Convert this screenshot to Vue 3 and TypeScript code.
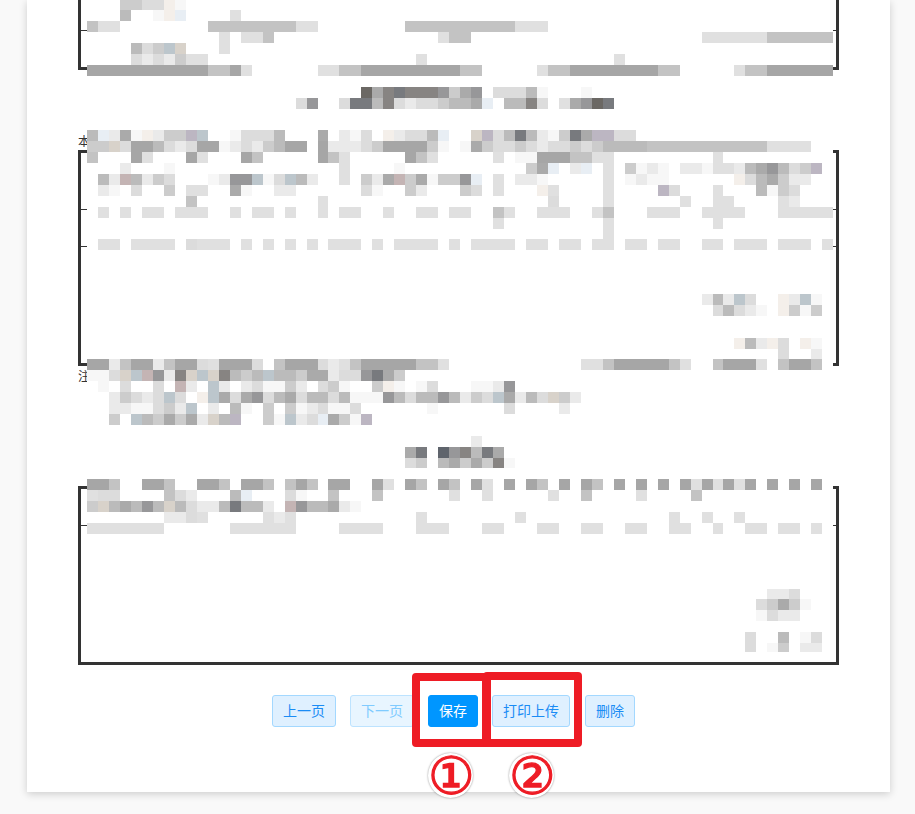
<script setup lang="ts">
interface Cell { key: string; x: number; y: number; w: number; h: number; fill: string }

const palette: Record<string, string> = {
  A: '#a6a6a6', B: '#c3c3c3', C: '#e0e0e0',
  '5': '#5f646c', '6': '#6b6864', '7': '#787a7e', '8': '#878482', '9': '#979799',
  a: '#aaaaaa', b: '#bbbbbb', c: '#cccccc', d: '#dcdcdc', e: '#eaeaea', f: '#f7f7f7',
  p: '#c4b4b4', u: '#bcc6cc', v: '#bcb6c2', w: '#d8d2ca', q: '#f4efea', r: '#e8eef4',
}

// Each row: top, height, then "firstColumn:tones" runs of 11px mosaic blocks.
const rows: [number, number, string][] = [
  [-1, 11, '3:ccddqf'],
  [10, 11, '3:b 6:fqr 13:C'],
  [21, 11, '0:BCC 11:BBBBBBBBCC 29:BBBBBBBBBBCCC'],
  [32, 11, '12:C 14:CCB 32:CBB 56:CCCCCC 62:BBBBBB'],
  [43, 11, '4:bdcuw 12:C'],
  [54, 11, '4:dedecCC 30:C 48:C'],
  [65, 11, '0:AAAAAAAAAAABBAC 21:CCBBAAAAAAAAABB 41:CBBAAAAAAAABB 59:CBBAAAAAA'],
  [87, 11, '25:6a878889ca9.dddbf 45:f'],
  [98, 11, '19:d9 23:d77b8deddcbbar.bb8d.Ca967'],
  [130, 11, '0:breafqeccvu 13:fdddb 21:a.efd.qeddbr 35:wvdb7befc7avvdd'],
  [141, 11, '0:ccwdAAbdedAAfedecbAA.Aeeedc 27:AAAAcf.facddcdeddcdcbbbbBBBBBBBBBBBCCCC'],
  [152, 11, '0:B 4:AC 9:AC 14:AB 21:ABC 29:ABC 37:C 39:ffAAABBCC 57:C'],
  [163, 11, '3:e 7:f 23:C 28:f 40:car.er.C.cfef.eefCCeba9bdcv'],
  [174, 11, '1:bepbecd 11:fe99ufdube 23:C 25:ceapcafcc9r 37:C 39:eef 47:C 49:feff 59:qdbacee'],
  [185, 11, '1:ef 4:d 7:c 9:CC 13:af 17:ee 25:df 29:ce 34:cd 37:C 41:qC 47:C 52:vd 57:C 61:bfcd'],
  [196, 11, '9:B 21:C 42:d 47:C 54:C 57:CC 63:Ce'],
  [207, 11, '1:C 3:C 5:CC 8:CCC 13:C 15:CC 18:C 21:C 23:CC 27:C 30:CC 33:CC 37:BC 41:CCC 46:CB 51:CCC 56:CCCC 63:CCCCC'],
  [218, 11, '37:C 47:C 57:C'],
  [229, 10, '47:C'],
  [239, 11, '1:CC 4:CCCC 9:dCCC 14:C 16:C 18:C 20:C 22:CCC 26:C 28:CCCC 33:C 35:CCCC 40:CC 43:CC 46:CC 49:CC 52:CC 56:CC 59:CCC 63:CCC 67:C'],
  [294, 11, '56:ebeud 63:qeuf'],
  [305, 11, '57:dbde 61:f 63:qcfc'],
  [338, 11, '59:qbeqd 65:qf'],
  [349, 10, '63:d 66:e'],
  [359, 11, '0:AAeBAAeBAAdCAAAd.BAAAdeCBAAAAABBC 45:CCBAAAAABC 57:BAAAC 63:BAAB'],
  [370, 11, '0:ffdwup9e8wuw8bcbubbcaaedd97ac'],
  [381, 11, '1:f 3:d 6:d 8:pe 11:ue 14:ed 16:ff 18:ce 21:dc 23:f 26:cqf 30:fd 35:ffe9'],
  [392, 11, '2:ecdedud.quada9dbadbbdbfff9bdbb9becduaebdwce'],
  [403, 11, '2:eeffdceu 11:e 13:bf 16:c 18:cfedffd 31:f 38:d 43:e'],
  [414, 11, '2:c 4:ubcacaewbv 16:cfuedracfv'],
  [436, 11, '35:e'],
  [447, 11, '29:a7 32:598b7a'],
  [458, 10, '29:dc 32:bacac8f'],
  [479, 11, '0:AAB 5:AAB 10:AAB 14:AAB 18:BAB 22:AA 26:AC 29:AB 32:AB 35:AC 38:A 40:AB 43:A 45:AB 48:A 50:A 52:A 54:ACACACA 62:A 64:A 66:A'],
  [490, 11, '0:Cdd 7:Bde 13:br 18:df 22:B 26:B 33:C 36:C 42:C 45:B 50:C 55:B'],
  [501, 11, '0:cwbab9bwbdeeb7bbe.p9bbaef'],
  [512, 11, '7:eedC 16:CeC 30:C 39:C 53:C 56:C 59:C'],
  [523, 11, '0:CCCCCCC 13:CCCCCC 23:CCCC 30:CCC 36:CC 41:CC 45:CC 49:CC 53:CC 57:C 60:CC 63:CC 66:C'],
  [589, 10, '62:eed'],
  [599, 11, '61:dcacf'],
  [610, 11, '61:fdee'],
  [632, 11, '60:d 63:b 65:fd'],
  [643, 9, '60:d 62:fc 65:ee'],
]

// The mosaic grid loses one pixel at two column boundaries.
function colX(i: number): number {
  return 87 + 11 * i - (i >= 58 ? 2 : i >= 22 ? 1 : 0)
}

const cells: Cell[] = rows.flatMap(([y, h, spec]) =>
  spec.split(' ').flatMap((run) => {
    const [start, tones] = run.split(':')
    return Array.from(tones).flatMap((tone, n) => {
      const i = Number(start) + n
      const fill = palette[tone]
      if (!fill) return []
      return [{ key: `${y}-${i}`, x: colX(i), y, w: colX(i + 1) - colX(i), h, fill }]
    })
  }),
)

const buttons = [
  { label: '上一页', kind: 'plain' },
  { label: '下一页', kind: 'disabled' },
  { label: '保存', kind: 'primary' },
  { label: '打印上传', kind: 'plain' },
  { label: '删除', kind: 'plain' },
]
</script>

<template>
  <div class="page">
    <main class="card">
      <section class="table table-open">
        <div class="row row-first"></div>
      </section>
      <p class="note note-top">本</p>
      <section class="table table-middle">
        <div class="row row-tall"></div>
        <div class="row row-short"></div>
      </section>
      <p class="note note-bottom">注</p>
      <section class="table table-last">
        <div class="row row-short"></div>
      </section>
      <div class="actions">
        <button v-for="b in buttons" :key="b.label" type="button" class="btn" :class="b.kind">{{ b.label }}</button>
      </div>
    </main>

    <svg class="mosaic" viewBox="0 0 915 814" width="915" height="814" shape-rendering="crispEdges" aria-hidden="true">
      <rect x="87" y="0" width="746" height="653" fill="#ffffff" />
      <rect v-for="c in cells" :key="c.key" :x="c.x" :y="c.y" :width="c.w" :height="c.h" :fill="c.fill" />
    </svg>

    <div class="mark mark-one"></div>
    <div class="mark mark-two"></div>
    <div class="num num-one">①</div>
    <div class="num num-two">②</div>
  </div>
</template>

<style scoped>
.page {
  position: relative;
  width: 915px;
  height: 814px;
  overflow: hidden;
  background: #f9f9f9;
  font-family: "Noto Sans CJK SC", "Noto Sans", sans-serif;
}
.card {
  box-sizing: border-box;
  width: 863px;
  height: 792px;
  margin-left: 27px;
  padding: 0 51px;
  background: #ffffff;
  box-shadow: 0 2px 8px rgba(0, 0, 0, 0.18);
  display: flex;
  flex-direction: column;
}
.table {
  box-sizing: border-box;
  flex: none;
  border: 3px solid #333333;
}
.table-open {
  height: 70px;
  border-top: 0;
}
.table-middle {
  height: 216px;
}
.table-last {
  height: 179px;
}
.row {
  box-sizing: border-box;
  border-bottom: 1px solid #333333;
}
.row-first {
  height: 31px;
}
.row-tall {
  height: 57px;
}
.row-short {
  height: 37px;
}
.note {
  flex: none;
  margin: 0;
  font-size: 12px;
  line-height: 19px;
  height: 19px;
  color: #333333;
}
.note-top {
  margin-top: 61px;
}
.note-bottom {
  height: 20px;
  line-height: 20px;
  margin-bottom: 100px;
}
.actions {
  display: flex;
  justify-content: center;
  gap: 14px;
  margin-top: 30px;
  padding-right: 10px;
}
.btn {
  box-sizing: border-box;
  height: 32px;
  padding: 0 10px 2px;
  border: 1px solid #a3d8ff;
  border-radius: 3px;
  background: #dff0ff;
  color: #1a8cf5;
  font-family: inherit;
  font-size: 14px;
  line-height: 20px;
}
.btn:last-child {
  margin-left: 1px;
}
.btn.disabled {
  background: #e8f5ff;
  border-color: #bde3ff;
  color: #80cbff;
}
.btn.primary {
  background: #0096ff;
  border-color: #0096ff;
  color: #ffffff;
}
.mosaic {
  position: absolute;
  left: 0;
  top: 0;
  pointer-events: none;
}
.mark {
  position: absolute;
  box-sizing: border-box;
  border: 8px solid #ee1c25;
  border-radius: 4px;
}
.mark-one {
  left: 412px;
  top: 673px;
  width: 78px;
  height: 74px;
}
.mark-two {
  left: 483px;
  top: 672px;
  width: 99px;
  height: 75px;
}
.num {
  position: absolute;
  top: 753px;
  width: 45px;
  height: 45px;
  border-radius: 50%;
  background: #ffffff;
  box-shadow: 0 0 2px rgba(0, 0, 0, 0.45);
  color: #ee1c25;
  font-family: "DejaVu Sans", sans-serif;
  font-size: 52px;
  font-weight: 400;
  -webkit-text-stroke: 1.2px #ee1c25;
  line-height: 46px;
  text-align: center;
}
.num-one {
  left: 428px;
}
.num-two {
  left: 509px;
}
</style>

<style>
html,
body {
  margin: 0;
  background: #f9f9f9;
}
</style>
